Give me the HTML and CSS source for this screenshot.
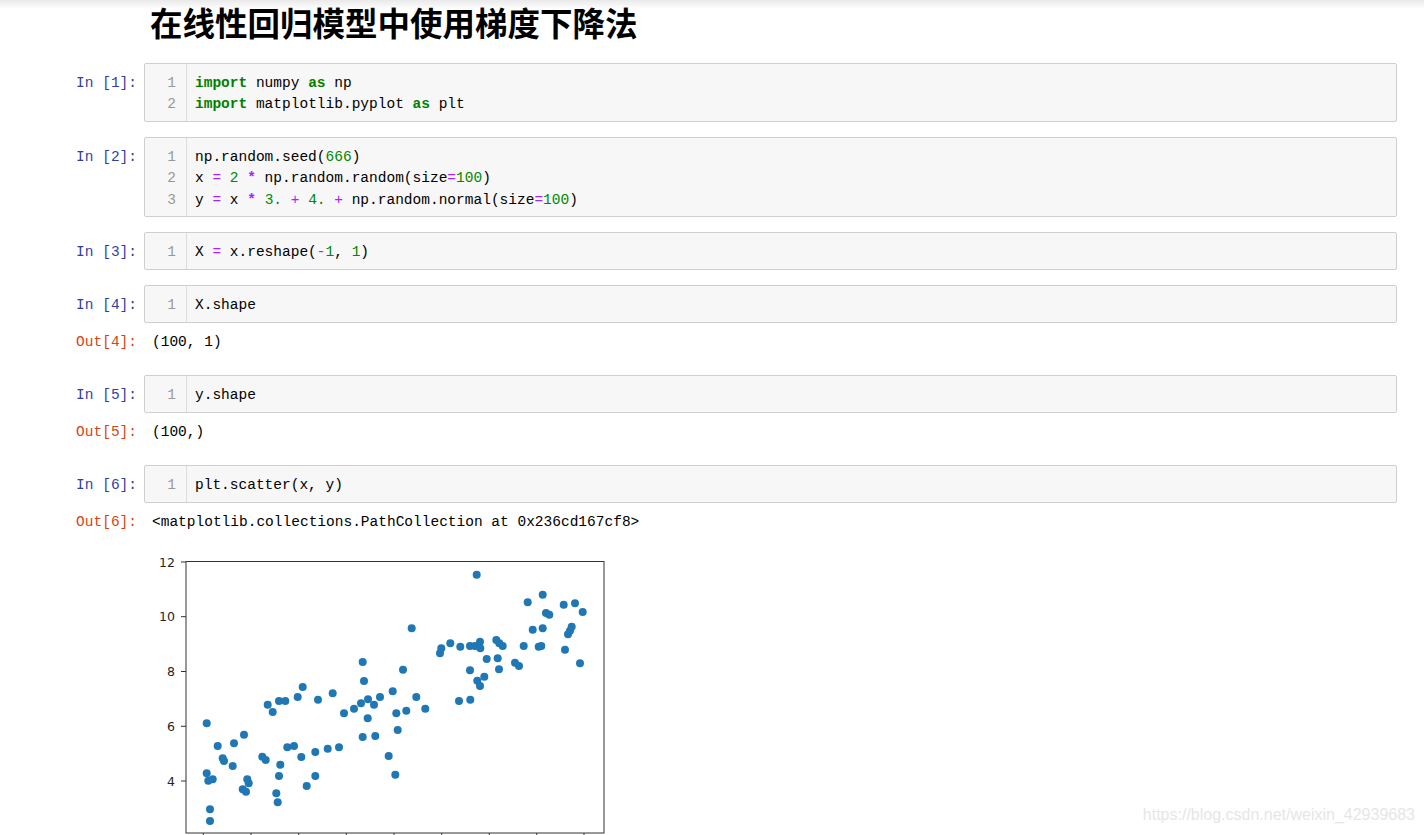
FILE: index.html
```html
<!DOCTYPE html>
<html>
<head>
	<meta charset="utf-8">
	<title>在线性回归模型中使用梯度下降法</title>
	<link rel="stylesheet" href="styles.css">
</head>
<body>
	<div class="topshade"></div>

	<div class="notebook">
		<h1 class="title">在线性回归模型中使用梯度下降法</h1>

		<div class="cells">
			<!-- In [1] -->
			<div class="cell">
				<div class="row">
					<div class="prompt in">In [1]:</div>
					<div class="editor">
						<div class="gutter">1<br>2</div>
<pre class="code"><span class="kw">import</span> numpy <span class="kw">as</span> np
<span class="kw">import</span> matplotlib.pyplot <span class="kw">as</span> plt</pre>
					</div>
				</div>
			</div>

			<!-- In [2] -->
			<div class="cell">
				<div class="row">
					<div class="prompt in">In [2]:</div>
					<div class="editor">
						<div class="gutter">1<br>2<br>3</div>
<pre class="code">np.random.seed(<span class="nu">666</span>)
x <span class="op">=</span> <span class="nu">2</span> <span class="op b">*</span> np.random.random(size<span class="op">=</span><span class="nu">100</span>)
y <span class="op">=</span> x <span class="op b">*</span> <span class="nu">3.</span> <span class="op">+</span> <span class="nu">4.</span> <span class="op">+</span> np.random.normal(size<span class="op">=</span><span class="nu">100</span>)</pre>
					</div>
				</div>
			</div>

			<!-- In [3] -->
			<div class="cell">
				<div class="row">
					<div class="prompt in">In [3]:</div>
					<div class="editor">
						<div class="gutter">1</div>
<pre class="code">X <span class="op">=</span> x.reshape(<span class="op">-</span><span class="nu">1</span>, <span class="nu">1</span>)</pre>
					</div>
				</div>
			</div>

			<!-- In [4] -->
			<div class="cell">
				<div class="row">
					<div class="prompt in">In [4]:</div>
					<div class="editor">
						<div class="gutter">1</div>
<pre class="code">X.shape</pre>
					</div>
				</div>
				<div class="row output">
					<div class="prompt out">Out[4]:</div>
					<div class="result">(100, 1)</div>
				</div>
			</div>

			<!-- In [5] -->
			<div class="cell">
				<div class="row">
					<div class="prompt in">In [5]:</div>
					<div class="editor">
						<div class="gutter">1</div>
<pre class="code">y.shape</pre>
					</div>
				</div>
				<div class="row output">
					<div class="prompt out">Out[5]:</div>
					<div class="result">(100,)</div>
				</div>
			</div>

			<!-- In [6] -->
			<div class="cell">
				<div class="row">
					<div class="prompt in">In [6]:</div>
					<div class="editor">
						<div class="gutter">1</div>
<pre class="code">plt.scatter(x, y)</pre>
					</div>
				</div>
				<div class="row output">
					<div class="prompt out">Out[6]:</div>
					<div class="result">&lt;matplotlib.collections.PathCollection at 0x236cd167cf8&gt;</div>
				</div>
				<div class="row plot-row">
					<div class="prompt"></div>
					<div class="figure">
						<svg class="plot" width="460" height="300" viewBox="152 540 460 300">
							<rect x="186" y="561.5" width="418" height="271.5" fill="#fff" stroke="#333" stroke-width="1"/>
							<g stroke="#333" stroke-width="1">
								<line x1="181" y1="562" x2="186" y2="562"/>
								<line x1="181" y1="616.7" x2="186" y2="616.7"/>
								<line x1="181" y1="671.5" x2="186" y2="671.5"/>
								<line x1="181" y1="726.3" x2="186" y2="726.3"/>
								<line x1="181" y1="781" x2="186" y2="781"/>
								<line x1="203.3" y1="833" x2="203.3" y2="838"/>
								<line x1="251" y1="833" x2="251" y2="838"/>
								<line x1="298.7" y1="833" x2="298.7" y2="838"/>
								<line x1="346.3" y1="833" x2="346.3" y2="838"/>
								<line x1="394" y1="833" x2="394" y2="838"/>
								<line x1="441.7" y1="833" x2="441.7" y2="838"/>
								<line x1="489.3" y1="833" x2="489.3" y2="838"/>
								<line x1="536.7" y1="833" x2="536.7" y2="838"/>
								<line x1="584" y1="833" x2="584" y2="838"/>
							</g>
							<g class="ticklabels" text-anchor="end">
								<text x="175" y="566.5">12</text>
								<text x="175" y="621.2">10</text>
								<text x="175" y="676">8</text>
								<text x="175" y="730.8">6</text>
								<text x="175" y="785.5">4</text>
							</g>
							<g fill="#1f77b4">
								<circle cx="206.7" cy="723.3" r="4"/>
								<circle cx="206.7" cy="773.3" r="4"/>
								<circle cx="208.3" cy="780.7" r="4"/>
								<circle cx="212.7" cy="779.3" r="4"/>
								<circle cx="210" cy="809.3" r="4"/>
								<circle cx="210" cy="821" r="4"/>
								<circle cx="217.7" cy="746" r="4"/>
								<circle cx="222.7" cy="758.3" r="4"/>
								<circle cx="224" cy="761" r="4"/>
								<circle cx="232.7" cy="766" r="4"/>
								<circle cx="234" cy="743.3" r="4"/>
								<circle cx="244" cy="734.7" r="4"/>
								<circle cx="242.7" cy="789.3" r="4"/>
								<circle cx="246" cy="791.7" r="4"/>
								<circle cx="247.3" cy="779.3" r="4"/>
								<circle cx="248.7" cy="783.3" r="4"/>
								<circle cx="262.3" cy="756.7" r="4"/>
								<circle cx="265.7" cy="760" r="4"/>
								<circle cx="267.7" cy="704.7" r="4"/>
								<circle cx="272.7" cy="712" r="4"/>
								<circle cx="276.3" cy="793.3" r="4"/>
								<circle cx="277.7" cy="802.3" r="4"/>
								<circle cx="279" cy="776" r="4"/>
								<circle cx="280.3" cy="764.7" r="4"/>
								<circle cx="279" cy="701" r="4"/>
								<circle cx="285.3" cy="701" r="4"/>
								<circle cx="287.3" cy="747.3" r="4"/>
								<circle cx="294" cy="746" r="4"/>
								<circle cx="297.7" cy="697" r="4"/>
								<circle cx="302.7" cy="687" r="4"/>
								<circle cx="301.3" cy="757" r="4"/>
								<circle cx="306.7" cy="786" r="4"/>
								<circle cx="315.3" cy="776" r="4"/>
								<circle cx="315.3" cy="752" r="4"/>
								<circle cx="318" cy="699.7" r="4"/>
								<circle cx="327.7" cy="748.7" r="4"/>
								<circle cx="332.7" cy="693.3" r="4"/>
								<circle cx="339" cy="747.3" r="4"/>
								<circle cx="344" cy="713.3" r="4"/>
								<circle cx="354" cy="708.7" r="4"/>
								<circle cx="362.7" cy="662" r="4"/>
								<circle cx="364" cy="681" r="4"/>
								<circle cx="362.7" cy="737" r="4"/>
								<circle cx="361" cy="703.3" r="4"/>
								<circle cx="368" cy="699.3" r="4"/>
								<circle cx="367.7" cy="718.3" r="4"/>
								<circle cx="375.3" cy="736" r="4"/>
								<circle cx="374" cy="704.7" r="4"/>
								<circle cx="380" cy="697" r="4"/>
								<circle cx="388.7" cy="756" r="4"/>
								<circle cx="392.7" cy="691.3" r="4"/>
								<circle cx="396.3" cy="713.3" r="4"/>
								<circle cx="395.3" cy="774.7" r="4"/>
								<circle cx="397.7" cy="730" r="4"/>
								<circle cx="403" cy="669.7" r="4"/>
								<circle cx="406.3" cy="710.7" r="4"/>
								<circle cx="411.7" cy="628.3" r="4"/>
								<circle cx="416.3" cy="697" r="4"/>
								<circle cx="425.3" cy="708.7" r="4"/>
								<circle cx="440" cy="653.3" r="4"/>
								<circle cx="441.3" cy="648.3" r="4"/>
								<circle cx="450.3" cy="643.3" r="4"/>
								<circle cx="459" cy="701" r="4"/>
								<circle cx="460.3" cy="646.7" r="4"/>
								<circle cx="470" cy="670.3" r="4"/>
								<circle cx="470.3" cy="699.7" r="4"/>
								<circle cx="470" cy="646" r="4"/>
								<circle cx="476.7" cy="574.7" r="4"/>
								<circle cx="477.3" cy="680.7" r="4"/>
								<circle cx="480" cy="686" r="4"/>
								<circle cx="475" cy="646" r="4"/>
								<circle cx="480" cy="641.7" r="4"/>
								<circle cx="480.3" cy="648.3" r="4"/>
								<circle cx="484.3" cy="676.7" r="4"/>
								<circle cx="486.7" cy="659" r="4"/>
								<circle cx="496.3" cy="640" r="4"/>
								<circle cx="499.3" cy="643.3" r="4"/>
								<circle cx="502.7" cy="646" r="4"/>
								<circle cx="497.7" cy="658.3" r="4"/>
								<circle cx="499" cy="669.3" r="4"/>
								<circle cx="515" cy="662.7" r="4"/>
								<circle cx="519" cy="666" r="4"/>
								<circle cx="523.7" cy="646" r="4"/>
								<circle cx="527.7" cy="602.3" r="4"/>
								<circle cx="532.7" cy="629.7" r="4"/>
								<circle cx="538.7" cy="646.7" r="4"/>
								<circle cx="541.3" cy="646" r="4"/>
								<circle cx="542.7" cy="594.7" r="4"/>
								<circle cx="542.7" cy="628.3" r="4"/>
								<circle cx="546" cy="613" r="4"/>
								<circle cx="549.3" cy="614.7" r="4"/>
								<circle cx="563.7" cy="604.7" r="4"/>
								<circle cx="565" cy="649.7" r="4"/>
								<circle cx="568" cy="634.3" r="4"/>
								<circle cx="570" cy="630.7" r="4"/>
								<circle cx="571.7" cy="626.7" r="4"/>
								<circle cx="575" cy="603.3" r="4"/>
								<circle cx="580" cy="663.3" r="4"/>
								<circle cx="582.7" cy="612" r="4"/>
							</g>
						</svg>
					</div>
				</div>
			</div>
		</div>
	</div>

	<div class="watermark">https://blog.csdn.net/weixin_42939683</div>
</body>
</html>
```

FILE: styles.css
```css
body {
	margin: 0;
	background: #fff;
	color: #000;
	font-family: "Liberation Mono", "Noto Sans CJK SC", monospace;
	font-size: 14.5px;
}

.topshade {
	position: fixed;
	top: 0;
	left: 0;
	right: 0;
	height: 9px;
	background: linear-gradient(#e9e9e9, rgba(255, 255, 255, 0));
	pointer-events: none;
}

.notebook {
	padding-top: 1px;
}

.title {
	margin: 0 0 20px 150px;
	font-family: "Noto Sans CJK SC", sans-serif;
	font-size: 32.5px;
	font-weight: bold;
	line-height: 42px;
	color: #000;
}

.cells {
	display: flex;
	flex-direction: column;
	gap: 15.5px;
	margin-right: 27px;
}

.row {
	display: flex;
	line-height: 21.3px;
}

.prompt {
	flex: none;
	width: 144px;
	box-sizing: border-box;
	padding-right: 7px;
	text-align: right;
	white-space: pre;
}

.prompt.in {
	color: #303f9f;
	padding-top: 10px; /* рамка + отступ редактора */
}

.prompt.out {
	color: #d84315;
}

.editor {
	flex: 1;
	display: flex;
	border: 1px solid #cfcfcf;
	border-radius: 2px;
	background: #f7f7f7;
}

.gutter {
	flex: none;
	width: 42px;
	box-sizing: border-box;
	padding: 9px 10px 5px 0;
	border-right: 1px solid #ddd;
	text-align: right;
	color: #999;
}

.code {
	margin: 0;
	padding: 9px 8px 5px;
	font: inherit;
	line-height: 21.3px;
}

.kw {
	color: #008000;
	font-weight: bold;
}

.op {
	color: #aa22ff;
}

.op.b {
	font-weight: bold;
}

.nu {
	color: #008800;
}

.output {
	margin-top: 9px;
	padding-bottom: 7px;
}

.result {
	padding-left: 8px;
	white-space: pre;
}

.figure {
	padding-left: 8px;
}

.plot {
	display: block;
}

.ticklabels {
	font-family: "DejaVu Sans", sans-serif;
	font-size: 12.5px;
	fill: #262626;
}

.watermark {
	position: absolute;
	top: 806px;
	right: 9px;
	font-family: "Liberation Sans", sans-serif;
	font-size: 16px;
	color: #e6e6e6;
}
```
